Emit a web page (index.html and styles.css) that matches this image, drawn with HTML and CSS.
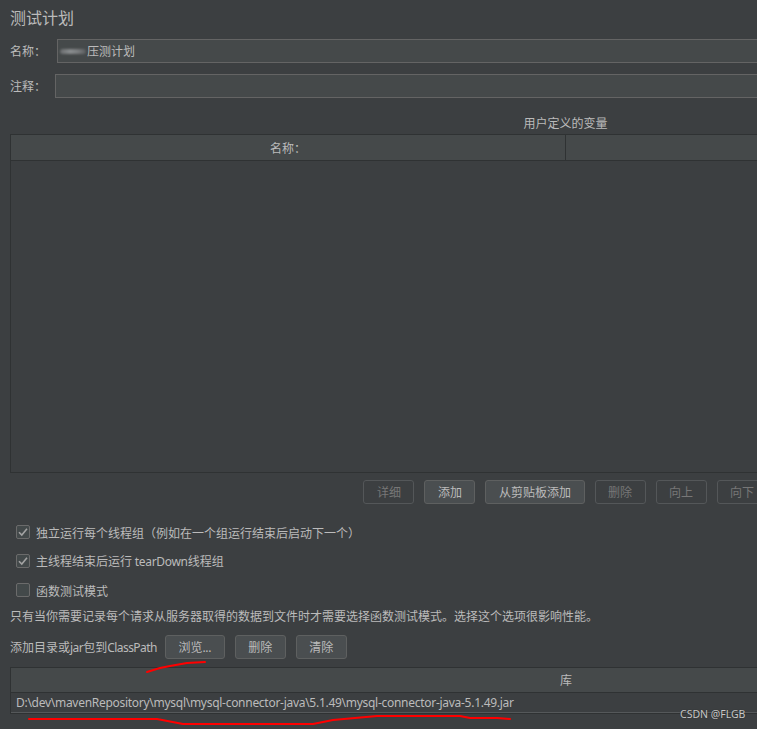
FILE: index.html
```html
<!DOCTYPE html>
<html lang="zh">
<head>
<meta charset="utf-8">
<title>测试计划</title>
<link rel="stylesheet" href="styles.css">
</head>
<body>
<div class="page">
  <div class="title">测试计划</div>

  <div class="field-row">
    <span class="label label-name">名称：</span>
    <div class="input"><span class="smudge"></span><span>压测计划</span></div>
  </div>
  <div class="field-row row-comment">
    <span class="label label-comment">注释：</span>
    <div class="input"></div>
  </div>

  <div class="section-caption">用户定义的变量</div>
  <div class="vars-table">
    <div class="vars-head">
      <div class="vars-col">名称：</div>
      <div class="vars-col vars-col-last"></div>
    </div>
    <div class="vars-body"></div>
  </div>

  <div class="btn-row">
    <button class="btn disabled">详细</button>
    <button class="btn">添加</button>
    <button class="btn">从剪贴板添加</button>
    <button class="btn disabled">删除</button>
    <button class="btn disabled">向上</button>
    <button class="btn disabled">向下</button>
  </div>

  <div class="checks">
    <label class="check"><span class="box checked"><svg viewBox="0 0 14 14" width="14" height="14"><polyline points="3,7.2 5.8,10 11,3.8" /></svg></span><span>独立运行每个线程组（例如在一个组运行结束后启动下一个）</span></label>
    <label class="check"><span class="box checked"><svg viewBox="0 0 14 14" width="14" height="14"><polyline points="3,7.2 5.8,10 11,3.8" /></svg></span><span>主线程结束后运行 <span class="latin">tearDown</span>线程组</span></label>
    <label class="check"><span class="box"></span><span>函数测试模式</span></label>
  </div>
  <div class="note">只有当你需要记录每个请求从服务器取得的数据到文件时才需要选择函数测试模式。选择这个选项很影响性能。</div>

  <div class="cp-row">
    <span class="cp-label">添加目录或<span class="latin">jar</span>包到<span class="latin">ClassPath</span></span>
    <button class="btn">浏览<span class="latin">...</span></button>
    <button class="btn">删除</button>
    <button class="btn">清除</button>
  </div>

  <div class="lib-table">
    <div class="lib-head">库</div>
    <div class="lib-row latin path">D:\dev\mavenRepository\mysql\mysql-connector-java\5.1.49\mysql-connector-java-5.1.49.jar</div>
  </div>
</div>

<svg class="marks" width="757" height="729" viewBox="0 0 757 729">
  <polyline points="147,672 160,668 170,666 187,663 205,662" />
  <polyline points="29,719 157,719 183,724 313,724 333,720 377,716 460,716 470,718 497,718 510,719" />
</svg>
<div class="watermark">CSDN @FLGB</div>
</body>
</html>
```
FILE: styles.css
```css
html, body {
  margin: 0;
  padding: 0;
  background: #3c3f41;
  overflow: hidden;
  width: 757px;
  height: 729px;
}
body {
  position: relative;
  color: #bbbbbb;
  font-family: "Noto Sans CJK SC", "Noto Sans", sans-serif;
  font-size: 12px;
}
.latin {
  font-family: "Noto Sans", "Noto Sans CJK SC", sans-serif;
  letter-spacing: -0.3px;
}
.page {
  width: 1111px;
  padding: 0 0 0 10px;
  display: flex;
  flex-direction: column;
}
.title {
  font-size: 16px;
  line-height: 22px;
  margin-top: 6px;
  height: 22px;
}
.field-row {
  display: flex;
  align-items: center;
  margin-top: 11px;
  height: 24px;
}
.row-comment {
  margin-top: 11px;
}
.label {
  line-height: 24px;
  flex: none;
}
.label-name { width: 47px; }
.label-comment { width: 45px; }
.input {
  flex: 1;
  height: 22px;
  background: #45494a;
  border: 1px solid #646464;
  border-right: none;
  line-height: 22px;
  display: flex;
  align-items: center;
  padding-left: 1px;
  color: #bbbbbb;
}
.smudge {
  display: inline-block;
  width: 26px;
  height: 5px;
  margin: 0 1px 0 1px;
  border-radius: 3px;
  background: linear-gradient(90deg, #6a6d6f, #8a8d8f 40%, #7a7c7e 70%, #5a5d5f);
  filter: blur(1.2px);
}
.section-caption {
  text-align: center;
  margin-top: 15px;
  line-height: 20px;
  height: 20px;
}
.vars-table {
  margin-top: 1px;
  height: 337px;
  border: 1px solid #2f3233;
  display: flex;
  flex-direction: column;
}
.vars-head {
  display: flex;
  height: 25px;
  background: #45494a;
  border-bottom: 1px solid #2f3233;
}
.vars-col {
  flex: 1;
  text-align: center;
  line-height: 25px;
}
.vars-col-last {
  border-left: 1px solid #2f3233;
}
.vars-body {
  flex: 1;
  background: #3c3f41;
}
.btn-row {
  display: flex;
  justify-content: center;
  gap: 10px;
  margin-top: 7px;
  height: 24px;
}
.btn {
  font-family: "Noto Sans CJK SC", "Noto Sans", sans-serif;
  font-size: 12px;
  height: 24px;
  padding: 0 12.5px;
  background: #4a4e50;
  border: 1px solid #5e6060;
  border-radius: 3px;
  color: #bbbbbb;
  line-height: 22px;
  margin: 0;
}
.btn.disabled {
  background: #3c3f41;
  border-color: #545759;
  color: #777777;
}
.checks {
  display: flex;
  flex-direction: column;
  margin-top: 18px;
  gap: 9px;
}
.check {
  display: flex;
  align-items: center;
  height: 20px;
  gap: 6px;
  padding-left: 6px;
}
.box {
  width: 12px;
  height: 12px;
  border: 1px solid #6b6b6b;
  background: #43494a;
  border-radius: 2px;
  flex: none;
  display: flex;
  align-items: center;
  justify-content: center;
}
.box svg {
  flex: none;
}
.box polyline {
  fill: none;
  stroke: #a3a3a3;
  stroke-width: 1.6;
}
.note {
  margin-top: 6px;
  line-height: 20px;
}
.cp-row {
  display: flex;
  align-items: center;
  gap: 10px;
  margin-top: 9px;
  height: 24px;
}
.cp-label {
  margin-right: -2px;
}
.cp-label .latin {
  letter-spacing: -0.55px;
}
.lib-table {
  margin-top: 8px;
  border: 1px solid #2f3233;
  border-right: none;
}
.lib-head {
  height: 24px;
  line-height: 24px;
  background: #45494a;
  text-align: center;
  border-bottom: 1px solid #2f3233;
}
.lib-row {
  height: 19px;
  line-height: 19px;
  padding-left: 5px;
  border-bottom: 1px solid #55585a;
  white-space: nowrap;
}
.path {
  letter-spacing: -0.28px;
}
.marks {
  position: absolute;
  left: 0;
  top: 0;
  pointer-events: none;
}
.marks polyline {
  fill: none;
  stroke: #ff0000;
  stroke-width: 2;
  stroke-linecap: round;
  stroke-linejoin: round;
}
.watermark {
  position: absolute;
  left: 680px;
  top: 707px;
  font-family: "Noto Sans", sans-serif;
  font-size: 10.5px;
  color: #c8c8c8;
  text-shadow: 0 0 1px #222;
}
```
